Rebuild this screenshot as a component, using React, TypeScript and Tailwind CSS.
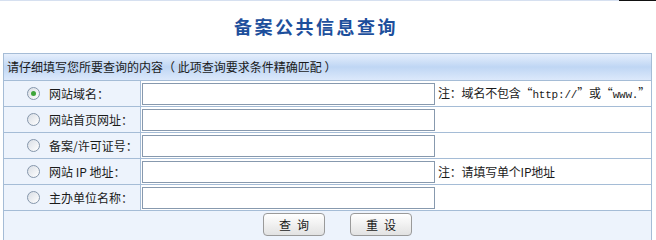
import React from 'react'

const font = { fontFamily: '"Noto Sans CJK SC", "Noto Sans", sans-serif' }
const mono = { fontFamily: '"Liberation Mono", monospace' }

function Radio({ checked }: { checked?: boolean }) {
  return (
    <span className="flex h-[13px] w-[13px] items-center justify-center rounded-full border border-[#8596ab] bg-gradient-to-br from-[#d9dee5] to-white">
      {checked && <span className="h-[5px] w-[5px] rounded-full bg-[#3fa63a]" />}
    </span>
  )
}

const domainNote = (
  <>
    注：域名不包含“<span className="text-[11px]" style={mono}>http://</span>”或“
    <span className="text-[11px]" style={mono}>www.</span>”
  </>
)

const rows = [
  { label: '网站域名：', checked: true, note: domainNote },
  { label: '网站首页网址：' },
  { label: '备案/许可证号：' },
  { label: '网站 IP 地址：', note: '注：请填写单个IP地址' },
  { label: '主办单位名称：' },
]

export default function App() {
  return (
    <div className="h-[240px] w-[656px] overflow-hidden bg-white text-[12px] text-[#1a1a1a]" style={font}>
      <div className="flex h-[1px]">
        <div className="flex-1 bg-[#d6e0f0]" />
        <div className="w-[37px] bg-[#111]" />
      </div>
      <h1 className="pt-[14px] pl-[234px] text-[18px] font-bold leading-[22px] tracking-[2.5px] text-[#1d4f9c]">
        备案公共信息查询
      </h1>
      <div className="mt-[16px] ml-[3px] w-[649px] border-x border-t border-[#a5bcd6]">
        <div className="h-[27px] border-b border-[#a5bcd6] bg-gradient-to-b from-[#e6effc] via-[#bfd6f4] to-[#dce9fb] px-[3px] leading-[26px]">
          请仔细填写您所要查询的内容（ 此项查询要求条件精确匹配 ）
        </div>
        {rows.map((r) => (
          <div key={r.label} className="grid h-[26px] grid-cols-[137px_1fr] border-b border-[#a5bcd6]">
            <div className="flex items-center gap-[9px] border-r border-[#a5bcd6] bg-[#edf3fc] pl-[23px]">
              <Radio checked={r.checked} />
              <span>{r.label}</span>
            </div>
            <div className="flex items-center bg-white">
              <input className="ml-[1px] h-[22px] w-[293px] border border-[#8799ae] bg-white outline-none" />
              {r.note && <span className="ml-[3px] whitespace-nowrap tracking-[-0.2px]">{r.note}</span>}
            </div>
          </div>
        ))}
        <div className="flex h-[40px] gap-[25px] bg-[#edf3fc] pt-[2px] pl-[259px]">
          <button className="h-[23px] w-[62px] rounded-[4px] border border-[#9a9a9a] bg-gradient-to-b from-white to-[#e2e2e2] pl-[6px] text-[12px] tracking-[6px]">
            查询
          </button>
          <button className="h-[23px] w-[62px] rounded-[4px] border border-[#9a9a9a] bg-gradient-to-b from-white to-[#e2e2e2] pl-[6px] text-[12px] tracking-[6px]">
            重设
          </button>
        </div>
      </div>
    </div>
  )
}
